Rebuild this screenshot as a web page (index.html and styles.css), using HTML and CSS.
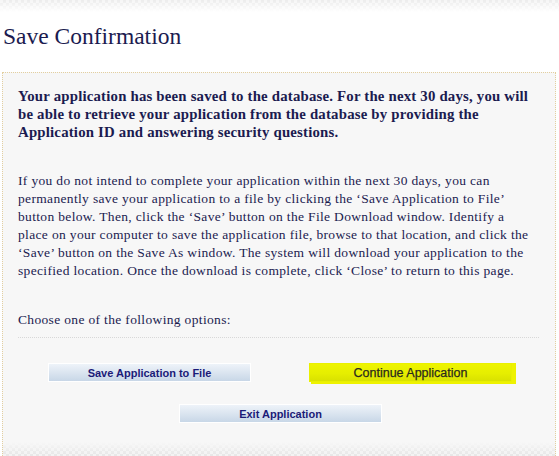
FILE: index.html
```html
<!DOCTYPE html>
<html>
<head>
<meta charset="utf-8">
<link rel="stylesheet" href="styles.css">
</head>
<body>
<div class="topband"></div>
<h1 class="title">Save Confirmation</h1>
<div class="panel">
  <p class="lead">Your application has been saved to the database. For the next 30 days, you will<br>be able to retrieve your application from the database by providing the<br>Application ID and answering security questions.</p>
  <p class="info">If you do not intend to complete your application within the next 30 days, you can<br>permanently save your application to a file by clicking the ‘Save Application to File’<br>button below. Then, click the ‘Save’ button on the File Download window. Identify a<br>place on your computer to save the application file, browse to that location, and click the<br>‘Save’ button on the Save As window. The system will download your application to the<br>specified location. Once the download is complete, click ‘Close’ to return to this page.</p>
  <p class="choose">Choose one of the following options:</p>
  <div class="actions">
    <div class="row">
      <button class="btn">Save Application to File</button>
      <button class="btn btn-hl">Continue Application</button>
    </div>
    <div class="row row-center">
      <button class="btn">Exit Application</button>
    </div>
  </div>
  <div class="bottomband"></div>
</div>
</body>
</html>
```

FILE: styles.css
```css
html, body {
  margin: 0;
  padding: 0;
  background: #ffffff;
}
body {
  font-family: "Liberation Serif", "Times New Roman", serif;
  color: #1b1b50;
  width: 559px;
  height: 456px;
  overflow: hidden;
}
.topband {
  height: 12px;
  background:
    linear-gradient(to bottom, rgba(255,255,255,0) 0%, #ffffff 100%),
    repeating-conic-gradient(#ececec 0 25%, #f6f6f6 0 50%) 0 0 / 6px 6px;
}
.title {
  font-weight: normal;
  font-size: 23.5px;
  margin: 10px 0 0 3px;
  line-height: 28px;
  color: #1b1b50;
}
.panel {
  margin: 22px 3px 0 2px;
  border-top: 1px dotted #e3cf9f;
  border-left: 1px dotted #e3cf9f;
  border-right: 1px dotted #e3cf9f;
  background: #f7f7f7;
  padding: 14px 16px 0 15px;
  position: relative;
  height: 384px;
  box-sizing: border-box;
}
.lead {
  margin: 0;
  font-weight: bold;
  font-size: 14.8px;
  letter-spacing: 0.2px;
  line-height: 18px;
  white-space: nowrap;
}
.info {
  margin: 31px 0 0;
  font-size: 13.5px;
  letter-spacing: 0.34px;
  line-height: 18px;
  white-space: nowrap;
}
.choose {
  margin: 31px 0 0;
  font-size: 13.5px;
  letter-spacing: 0.34px;
  line-height: 18px;
  padding-bottom: 8px;
  border-bottom: 1px dotted #d8d8d8;
}
.actions {
  display: flex;
  flex-direction: column;
  gap: 22px;
  padding-top: 25px;
}
.row {
  display: flex;
  gap: 58px;
  padding-left: 30px;
}
.row-center {
  padding-left: 161px;
}
.btn {
  width: 203px;
  height: 19px;
  padding: 0;
  border: 1px solid #ffffff;
  background: linear-gradient(to bottom, #eef3f9 0%, #dbe5f0 50%, #c8d7e7 100%);
  font-family: "Liberation Sans", Arial, sans-serif;
  font-weight: bold;
  font-size: 11px;
  color: #1b1b78;
  box-sizing: border-box;
}
.btn-hl {
  background: linear-gradient(to bottom, #eef400 0%, #e6ee00 55%, #d9e100 100%);
  border-color: #e9f000;
  color: #2a2a1e;
  font-weight: normal;
  font-size: 12.5px;
  -webkit-text-stroke: 0.25px #2a2a1e;
  box-shadow: 3px 1px 0 1px #eef200;
}
.bottomband {
  position: absolute;
  left: 0;
  right: 0;
  bottom: 0;
  height: 14px;
  background:
    linear-gradient(to top, rgba(247,247,247,0) 0%, #f7f7f7 100%),
    repeating-conic-gradient(#e6e6e6 0 25%, #f3f3f3 0 50%) 0 0 / 6px 6px;
}
```
